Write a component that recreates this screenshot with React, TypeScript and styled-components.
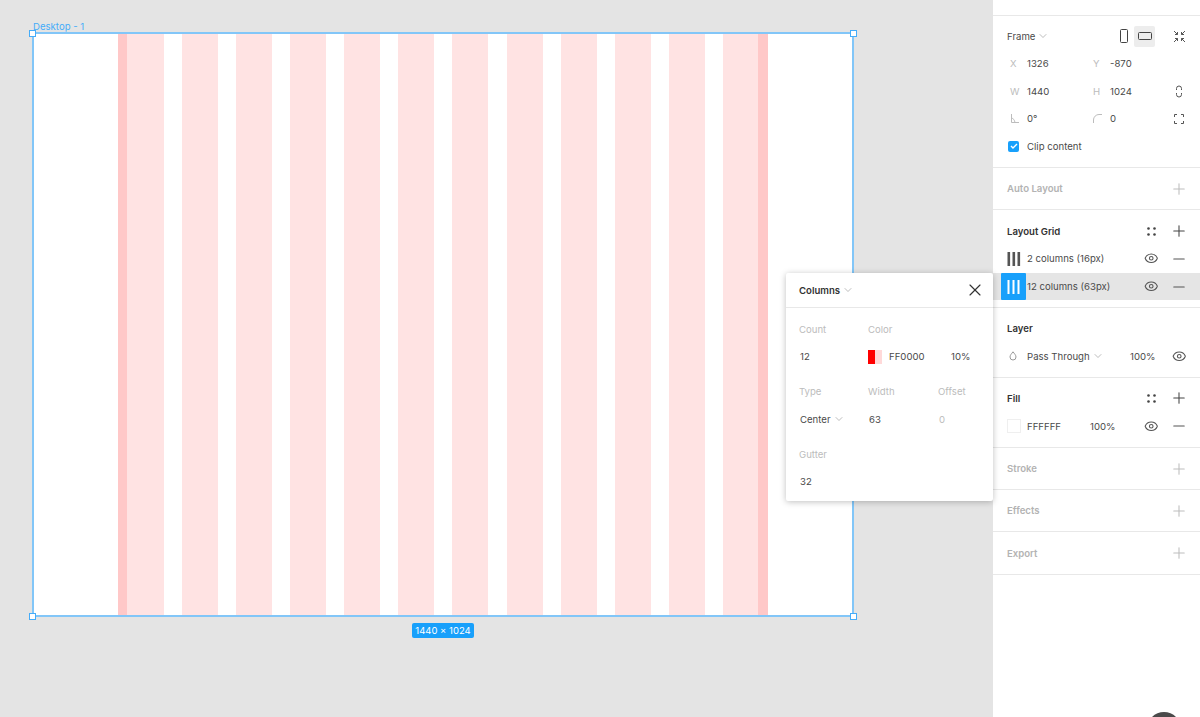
import styled, { createGlobalStyle } from 'styled-components';
import { ChevronDown, Eye, Minus, Plus, X } from 'lucide-react';

const GlobalStyle = createGlobalStyle`
  html, body {
    margin: 0;
    padding: 0;
    background: #e4e4e4;
  }
  * {
    box-sizing: border-box;
  }
`;

const Page = styled.div`
  position: relative;
  display: flex;
  width: 1200px;
  height: 717px;
  overflow: hidden;
  font-family: Inter, 'Liberation Sans', sans-serif;
  font-size: 9.6px;
  color: #4a4a4a;
`;

/* canvas */
const Canvas = styled.div`
  position: relative;
  flex: 1;
  background: #e4e4e4;
`;

const FrameName = styled.div`
  position: absolute;
  left: 33px;
  top: 21px;
  color: #45acf9;
`;

const FrameBox = styled.div`
  position: absolute;
  left: 32px;
  top: 32px;
  width: 822px;
  height: 585px;
  padding-left: 84px;
  background: #fff;
  border: 2px solid #82c6f8;
`;

const ColumnGrid = styled.div`
  display: flex;
  gap: 18.09px;
  height: 100%;
`;

const GridColumn = styled.div<{ $width: number; $edge?: 'left' | 'right' }>`
  width: ${(p) => p.$width}px;
  height: 100%;
  background: ${(p) =>
    p.$edge === 'left'
      ? 'linear-gradient(to right, #ffc8c8 9px, #ffe3e3 9px)'
      : p.$edge === 'right'
        ? 'linear-gradient(to left, #ffc8c8 10px, #ffe3e3 10px)'
        : '#ffe3e3'};
`;

const Handle = styled.div<{ $x: number; $y: number }>`
  position: absolute;
  left: ${(p) => p.$x}px;
  top: ${(p) => p.$y}px;
  width: 7px;
  height: 7px;
  background: #fff;
  border: 1px solid #45acf9;
`;

const SizeBadge = styled.div`
  position: absolute;
  left: 412px;
  top: 623px;
  width: 62px;
  height: 15px;
  border-radius: 2px;
  background: #18a0fb;
  color: #fff;
  font-size: 9.5px;
  line-height: 15px;
  text-align: center;
`;

/* right panel */
const Panel = styled.div`
  width: 207px;
  height: 100%;
  background: #fff;
  box-shadow: -1px 0 3px rgba(0, 0, 0, 0.06);
`;

const TopStrip = styled.div`
  height: 16px;
  border-bottom: 1px solid #e8e8e8;
`;

const Section = styled.section<{ $height: number }>`
  display: flow-root;
  height: ${(p) => p.$height}px;
  border-bottom: 1px solid #e8e8e8;
`;

const EmptySection = styled(Section)`
  display: flex;
  align-items: center;
  justify-content: space-between;
  padding: 0 12px 0 14px;
  color: #b3b3b3;
  font-weight: 600;
`;

const HeaderRow = styled.div<{ $top?: number }>`
  display: flex;
  align-items: center;
  height: 28px;
  margin-top: ${(p) => p.$top ?? 6}px;
  padding: 0 12px 0 14px;
  font-weight: 600;
  color: #333;
`;

const Spacer = styled.div`
  flex: 1;
`;

const FrameHead = styled.div`
  display: flex;
  align-items: center;
  gap: 2px;
  height: 28px;
  margin-top: 6px;
  padding: 0 14px;
`;

const DeviceGroup = styled.div`
  display: flex;
  align-items: center;
`;

const DeviceButton = styled.div<{ $active?: boolean }>`
  display: flex;
  align-items: center;
  justify-content: center;
  width: 21px;
  height: 21px;
  border-radius: 2px;
  background: ${(p) => (p.$active ? '#ededed' : 'transparent')};
`;

const ShrinkGap = styled.div`
  width: 18px;
`;

const PropRow = styled.div`
  display: grid;
  grid-template-columns: 17px 66px 17px 64px 10px;
  align-items: center;
  justify-items: start;
  height: 27.5px;
  padding-left: 17px;
`;

const PropLabel = styled.span`
  color: #bcbcbc;
`;

const PropIcon = styled.span`
  display: flex;
  justify-content: center;
  justify-self: center;
`;

const ClipRow = styled.div`
  display: flex;
  align-items: center;
  gap: 8px;
  height: 27.5px;
  padding-left: 15px;
`;

const CheckBox = styled.div`
  display: flex;
  align-items: center;
  justify-content: center;
  width: 11px;
  height: 11px;
  border-radius: 2px;
  background: #18a0fb;
`;

const ListRow = styled.div<{ $selected?: boolean }>`
  position: relative;
  display: flex;
  align-items: center;
  height: 27px;
  padding: 0 12px 0 34px;
  margin-top: ${(p) => (p.$selected ? '1px' : '0')};
  background: ${(p) => (p.$selected ? '#e5e5e5' : 'transparent')};
`;

const RowIcons = styled.div`
  display: flex;
  align-items: center;
  gap: 9.5px;
  margin-left: auto;
`;

const IconCell = styled.span`
  display: flex;
  align-items: center;
  justify-content: center;
  width: 18px;
`;

const BarsWrap = styled.div<{ $selected?: boolean }>`
  position: absolute;
  left: ${(p) => (p.$selected ? '8px' : '14px')};
  top: 0;
  display: flex;
  align-items: center;
  justify-content: center;
  width: ${(p) => (p.$selected ? '25px' : '14px')};
  height: 27px;
  border-radius: 1px;
  background: ${(p) => (p.$selected ? '#18a0fb' : 'transparent')};
`;

const LayerRow = styled.div`
  display: flex;
  align-items: center;
  height: 28px;
  padding: 0 12px 0 16px;
`;

const LayerName = styled.span`
  display: flex;
  align-items: center;
  gap: 2px;
  margin-left: 10px;
`;

const LayerOpacity = styled.span`
  margin-right: 5px;
`;

const FillSwatch = styled.div`
  width: 14px;
  height: 14px;
  border: 1px solid #efefef;
  background: #fff;
`;

const FillRow = styled.div`
  display: flex;
  align-items: center;
  height: 28px;
  padding: 0 12px 0 14px;
`;

const FillHex = styled.span`
  width: 63px;
  margin-left: 6px;
`;

const AvatarEdge = styled.div`
  position: absolute;
  left: 1147px;
  top: 712px;
  width: 34px;
  height: 34px;
  border-radius: 50%;
  background: #4a4a4a;
`;

/* columns popup */
const Popup = styled.div`
  position: absolute;
  left: 786px;
  top: 273px;
  width: 207px;
  height: 228px;
  background: #fff;
  border-radius: 2px;
  box-shadow: 0 1px 6px rgba(0, 0, 0, 0.25);
`;

const PopupHead = styled.div`
  display: flex;
  align-items: center;
  justify-content: space-between;
  height: 35px;
  padding: 0 8px 0 13px;
  border-bottom: 1px solid #e8e8e8;
`;

const PopupTitle = styled.span`
  display: flex;
  align-items: center;
  gap: 2px;
  font-weight: 600;
  color: #333;
`;

const PopupGrid = styled.div`
  display: grid;
  grid-template-columns: 69px 70px 1fr;
  grid-auto-rows: 31.2px;
  padding: 6px 0 0 13px;
`;

const PopupLabel = styled.div`
  align-self: center;
  color: #bcbcbc;
`;

const PopupValue = styled.div<{ $muted?: boolean }>`
  display: flex;
  align-self: start;
  align-items: center;
  gap: 2px;
  height: 23px;
  padding-left: 1px;
  color: ${(p) => (p.$muted ? '#bcbcbc' : '#4a4a4a')};
`;

const ColorCell = styled.div`
  grid-column: 2 / 4;
  display: flex;
  align-self: start;
  align-items: center;
  height: 23px;
`;

const ColorSwatch = styled.div`
  width: 14px;
  height: 14px;
  background: linear-gradient(to right, #ff0000 50%, #ffd9d9 50%);
`;

const ColorHex = styled.span`
  width: 62px;
  margin-left: 7px;
`;

function BarsIcon({ color, width = 2.6 }: { color: string; width?: number }) {
  return (
    <svg width="14" height="14" viewBox="0 0 14 14" fill={color}>
      <rect x="0.5" y="0" width={width} height="14" />
      <rect x="5.5" y="0" width={width} height="14" />
      <rect x="10.5" y="0" width={width} height="14" />
    </svg>
  );
}

function DotsIcon() {
  return (
    <IconCell>
      <svg width="9" height="9" viewBox="0 0 9 9" fill="#444">
        <circle cx="1.5" cy="1.5" r="1.3" />
        <circle cx="7.5" cy="1.5" r="1.3" />
        <circle cx="1.5" cy="7.5" r="1.3" />
        <circle cx="7.5" cy="7.5" r="1.3" />
      </svg>
    </IconCell>
  );
}

function AddIcon({ muted }: { muted?: boolean }) {
  return (
    <IconCell>
      <Plus size={18} strokeWidth={1.4} color={muted ? '#bdbdbd' : '#444'} />
    </IconCell>
  );
}

function RemoveIcon() {
  return (
    <IconCell>
      <Minus size={18} strokeWidth={1.4} color="#555" />
    </IconCell>
  );
}

function EyeIcon() {
  return (
    <IconCell>
      <Eye size={14.5} strokeWidth={1.8} color="#555" />
    </IconCell>
  );
}

function Caret() {
  return <ChevronDown size={12} strokeWidth={1.3} color="#999" />;
}

function ShrinkIcon() {
  return (
    <svg width="13" height="13" viewBox="0 0 13 13" fill="none" stroke="#555" strokeWidth="1">
      <path d="M1 1l3.500 3.500M4.500 2v2.500H2M12 1L8.500 4.500M8.500 2v2.500H11M1 12l3.500-3.500M2 8.500h2.500V11M12 12L8.500 8.500M11 8.500H8.500V11" />
    </svg>
  );
}

function LinkIcon() {
  return (
    <svg width="8" height="13" viewBox="0 0 8 13" fill="none" stroke="#555" strokeWidth="1">
      <path d="M1.500 5V3.500a2.500 2.500 0 0 1 5 0V5M1.500 8v1.500a2.500 2.500 0 0 0 5 0V8" />
    </svg>
  );
}

function CornersIcon() {
  return (
    <svg width="10" height="10" viewBox="0 0 10 10" fill="none" stroke="#555" strokeWidth="1">
      <path d="M.5 3V.5H3M7 .5h2.500V3M9.500 7v2.500H7M3 9.500H.5V7" />
    </svg>
  );
}

function AngleIcon() {
  return (
    <svg width="9" height="9" viewBox="0 0 9 9" fill="none" stroke="#bcbcbc" strokeWidth="1">
      <path d="M1.500 0v8.500H9M1.500 4c2 .5 3 2 3.500 4.500" />
    </svg>
  );
}

function RadiusIcon() {
  return (
    <svg width="9" height="9" viewBox="0 0 9 9" fill="none" stroke="#bcbcbc" strokeWidth="1">
      <path d="M.5 9V6A5.500 5.500 0 0 1 6 .5h3" />
    </svg>
  );
}

function DropIcon() {
  return (
    <svg width="8" height="10" viewBox="0 0 8 10" fill="none" stroke="#999" strokeWidth="1">
      <path d="M4 .8C5.500 2.800 7 4.200 7 6a3 3 0 0 1-6 0C1 4.200 2.500 2.800 4 .8z" />
    </svg>
  );
}

const columnWidths = [46, 36, 36, 36, 36, 36, 36, 36, 36, 36, 36, 45];

function App() {
  return (
    <Page>
      <GlobalStyle />
      <Canvas>
        <FrameName>Desktop - 1</FrameName>
        <FrameBox>
          <ColumnGrid>
            {columnWidths.map((w, i) => (
              <GridColumn
                key={i}
                $width={w}
                $edge={i === 0 ? 'left' : i === columnWidths.length - 1 ? 'right' : undefined}
              />
            ))}
          </ColumnGrid>
        </FrameBox>
        <Handle $x={29} $y={30} />
        <Handle $x={850} $y={30} />
        <Handle $x={29} $y={613} />
        <Handle $x={850} $y={613} />
        <SizeBadge>1440 × 1024</SizeBadge>
      </Canvas>

      <Panel>
        <TopStrip />
        <Section $height={152}>
          <FrameHead>
            Frame
            <Caret />
            <Spacer />
            <DeviceGroup>
              <DeviceButton>
                <svg width="8" height="14" viewBox="0 0 8 14" fill="none" stroke="#444" strokeWidth="1">
                  <rect x="0.5" y="0.5" width="7" height="13" rx="1" />
                </svg>
              </DeviceButton>
              <DeviceButton $active>
                <svg width="14" height="8" viewBox="0 0 14 8" fill="none" stroke="#444" strokeWidth="1">
                  <rect x="0.500" y="0.500" width="13" height="7" rx="1" />
                </svg>
              </DeviceButton>
              <ShrinkGap />
              <ShrinkIcon />
            </DeviceGroup>
          </FrameHead>
          <PropRow>
            <PropLabel>X</PropLabel>
            <span>1326</span>
            <PropLabel>Y</PropLabel>
            <span>-870</span>
          </PropRow>
          <PropRow>
            <PropLabel>W</PropLabel>
            <span>1440</span>
            <PropLabel>H</PropLabel>
            <span>1024</span>
            <PropIcon>
              <LinkIcon />
            </PropIcon>
          </PropRow>
          <PropRow>
            <AngleIcon />
            <span>0°</span>
            <RadiusIcon />
            <span>0</span>
            <PropIcon>
              <CornersIcon />
            </PropIcon>
          </PropRow>
          <ClipRow>
            <CheckBox>
              <svg width="8" height="8" viewBox="0 0 8 8" fill="none" stroke="#fff" strokeWidth="1.400">
                <path d="M1 4l2 2 4-4" />
              </svg>
            </CheckBox>
            Clip content
          </ClipRow>
        </Section>
        <EmptySection $height={42}>
          Auto Layout
          <AddIcon muted />
        </EmptySection>
        <Section $height={98}>
          <HeaderRow $top={7}>
            Layout Grid
            <RowIcons>
              <DotsIcon />
              <AddIcon />
            </RowIcons>
          </HeaderRow>
          <ListRow>
            <BarsWrap>
              <BarsIcon color="#555" />
            </BarsWrap>
            2 columns (16px)
            <RowIcons>
              <EyeIcon />
              <RemoveIcon />
            </RowIcons>
          </ListRow>
          <ListRow $selected>
            <BarsWrap $selected>
              <BarsIcon color="#fff" width={2} />
            </BarsWrap>
            12 columns (63px)
            <RowIcons>
              <EyeIcon />
              <RemoveIcon />
            </RowIcons>
          </ListRow>
        </Section>
        <Section $height={70}>
          <HeaderRow>Layer</HeaderRow>
          <LayerRow>
            <DropIcon />
            <LayerName>
              Pass Through
              <Caret />
            </LayerName>
            <RowIcons>
              <LayerOpacity>100%</LayerOpacity>
              <EyeIcon />
            </RowIcons>
          </LayerRow>
        </Section>
        <Section $height={70}>
          <HeaderRow>
            Fill
            <RowIcons>
              <DotsIcon />
              <AddIcon />
            </RowIcons>
          </HeaderRow>
          <FillRow>
            <FillSwatch />
            <FillHex>FFFFFF</FillHex>
            <span>100%</span>
            <RowIcons>
              <EyeIcon />
              <RemoveIcon />
            </RowIcons>
          </FillRow>
        </Section>
        <EmptySection $height={42}>
          Stroke
          <AddIcon muted />
        </EmptySection>
        <EmptySection $height={42}>
          Effects
          <AddIcon muted />
        </EmptySection>
        <EmptySection $height={43}>
          Export
          <AddIcon muted />
        </EmptySection>
      </Panel>

      <Popup>
        <PopupHead>
          <PopupTitle>
            Columns
            <Caret />
          </PopupTitle>
          <X size={20} strokeWidth={1.4} color="#333" />
        </PopupHead>
        <PopupGrid>
          <PopupLabel>Count</PopupLabel>
          <PopupLabel>Color</PopupLabel>
          <div />
          <PopupValue>12</PopupValue>
          <ColorCell>
            <ColorSwatch />
            <ColorHex>FF0000</ColorHex>
            10%
          </ColorCell>
          <PopupLabel>Type</PopupLabel>
          <PopupLabel>Width</PopupLabel>
          <PopupLabel>Offset</PopupLabel>
          <PopupValue>
            Center
            <Caret />
          </PopupValue>
          <PopupValue>63</PopupValue>
          <PopupValue $muted>0</PopupValue>
          <PopupLabel>Gutter</PopupLabel>
          <div />
          <div />
          <PopupValue>32</PopupValue>
        </PopupGrid>
      </Popup>
      <AvatarEdge />
    </Page>
  );
}

export default App;
